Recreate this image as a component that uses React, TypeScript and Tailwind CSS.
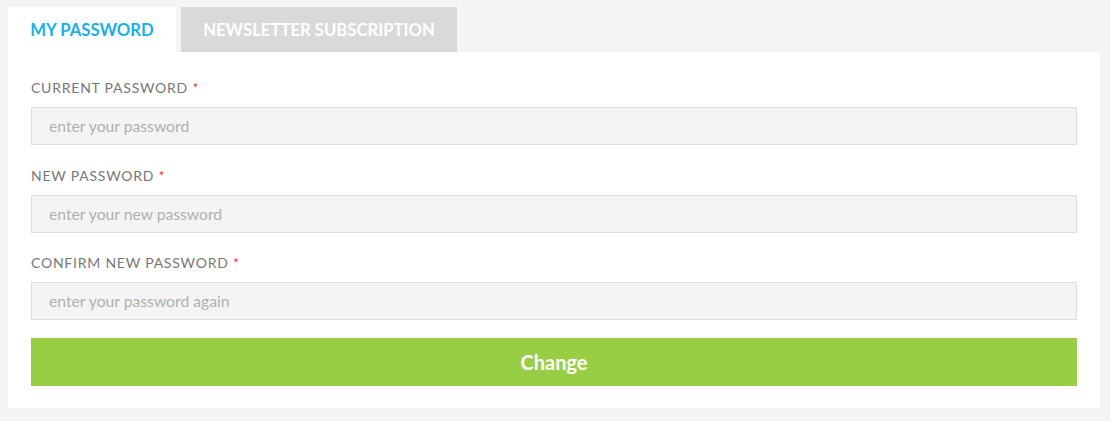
import React from 'react';

const fields = [
  { label: 'CURRENT PASSWORD', placeholder: 'enter your password', gap: '' },
  { label: 'NEW PASSWORD', placeholder: 'enter your new password', gap: 'mt-[21px]' },
  { label: 'CONFIRM NEW PASSWORD', placeholder: 'enter your password again', gap: 'mt-[20px]' },
];

const App: React.FC = () => {
  return (
    <div className="min-h-[421px] w-[1110px] bg-[#f4f4f4] pl-[8px] pt-[7px] pr-[10px] pb-[13px] font-['Lato','Noto_Sans',sans-serif]">
      {/* tabs */}
      <div className="flex gap-[5px]">
        <div className="flex h-[45px] w-[168px] items-center justify-center bg-white pt-[3px] text-[16.7px] font-bold text-[#1ab0e6]">
          MY PASSWORD
        </div>
        <div className="flex h-[45px] w-[276px] items-center justify-center bg-[#d9d9d9] pt-[3px] text-[16.7px] font-bold text-white">
          NEWSLETTER SUBSCRIPTION
        </div>
      </div>

      {/* form */}
      <div className="bg-white px-[23px] pt-[26px] pb-[22px]">
        {fields.map((f) => (
          <div key={f.label} className={f.gap}>
            <label className="block h-[20px] text-[14px] leading-[20px] tracking-[0.055em] text-[#777]">
              {f.label} <span className="text-[#d9343a]">*</span>
            </label>
            <input
              type="password"
              placeholder={f.placeholder}
              className="mt-[9px] block h-[38px] w-full border border-[#dedede] bg-[#f4f4f4] px-[17px] text-[15.7px] outline-none placeholder:text-[#b0b0b0]"
            />
          </div>
        ))}
        <button className="mt-[18px] block h-[48px] w-full bg-[#98ce44] text-[20px] font-bold text-white">
          Change
        </button>
      </div>
    </div>
  );
};

export default App;
